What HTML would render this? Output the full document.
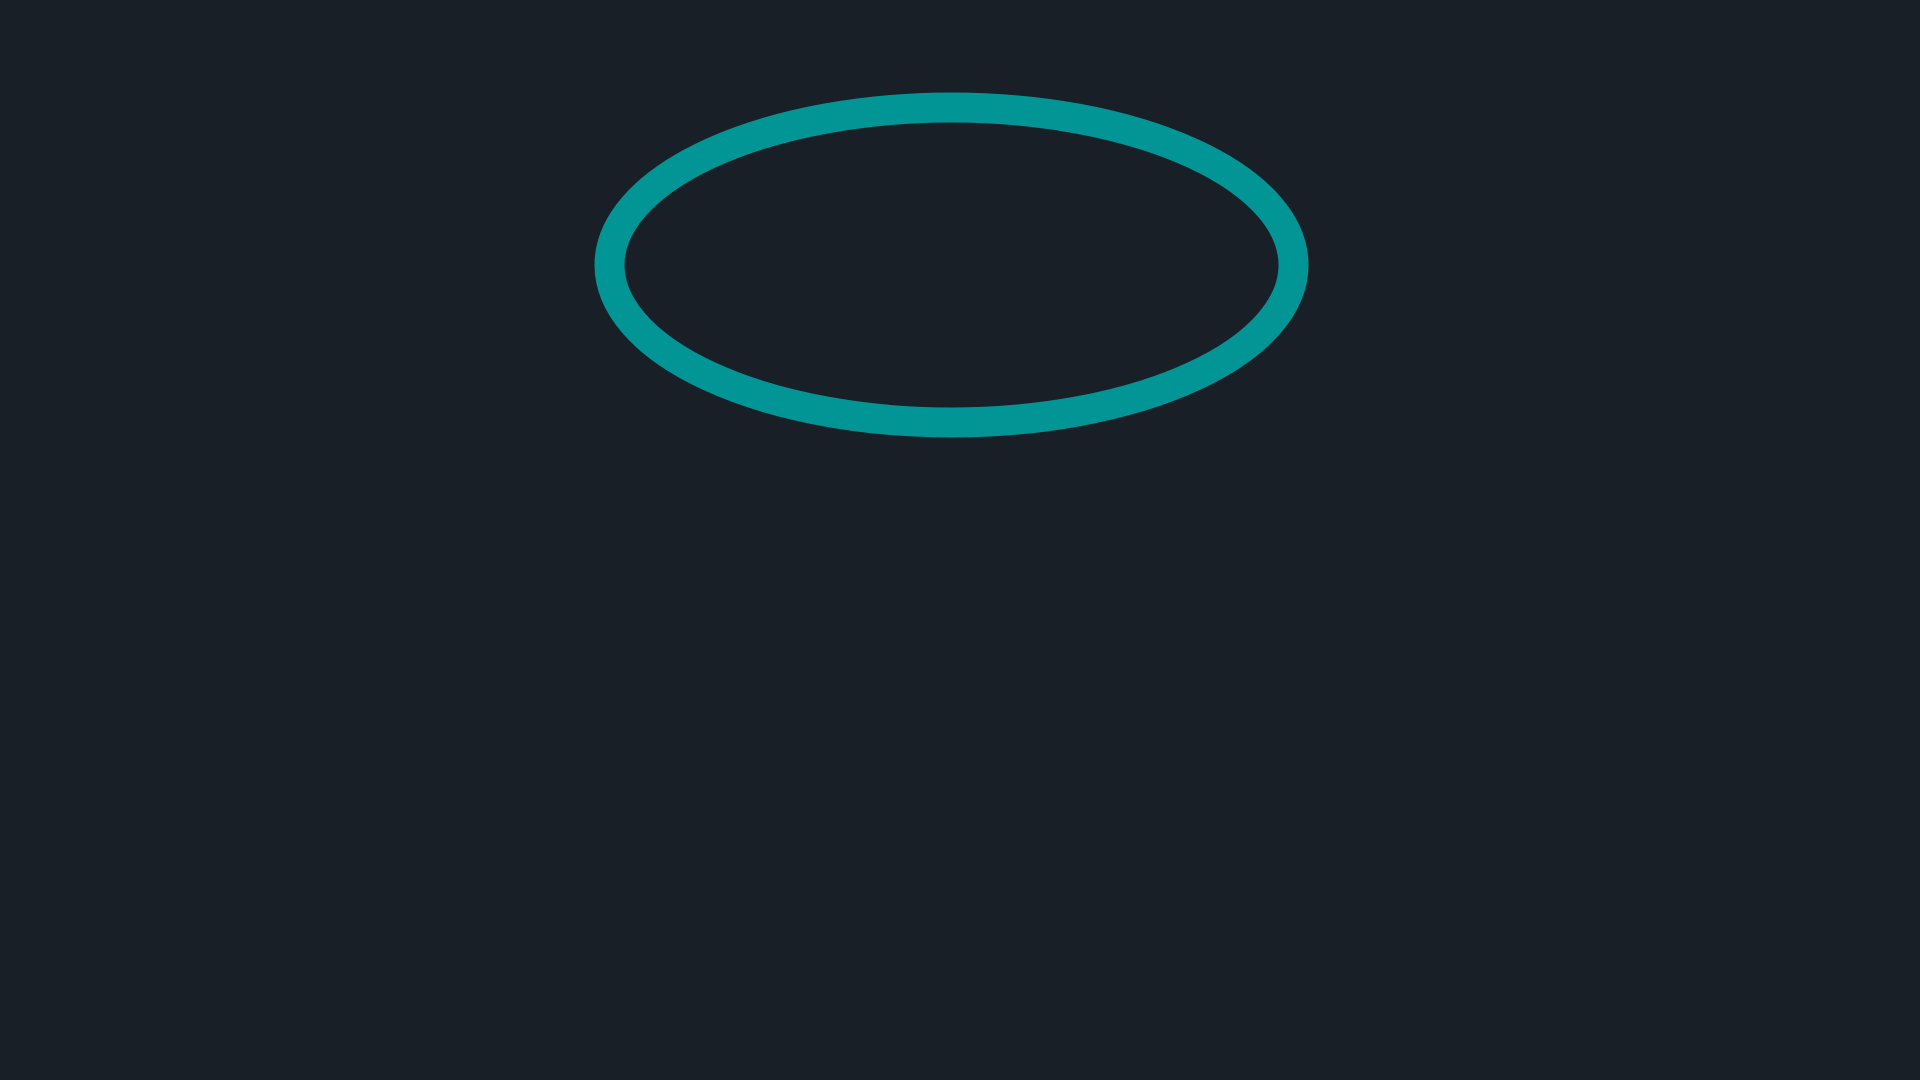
<!DOCTYPE html>
<html>
<head>
<meta charset="utf-8">
<style>
  html, body {
    margin: 0;
    padding: 0;
    width: 1920px;
    height: 1080px;
    background: #181f27;
    overflow: hidden;
  }
  svg {
    display: block;
  }
</style>
</head>
<body>
<svg width="1920" height="1080" viewBox="0 0 1920 1080" xmlns="http://www.w3.org/2000/svg">
  <rect width="1920" height="1080" fill="#181f27"/>
  <ellipse cx="951.5" cy="265" rx="342" ry="157.5" fill="none" stroke="#029595" stroke-width="30"/>
</svg>
</body>
</html>
